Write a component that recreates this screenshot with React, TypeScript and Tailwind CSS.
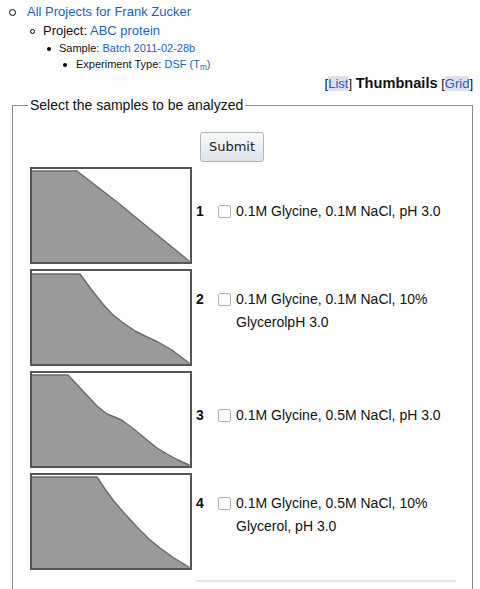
import React from "react";

const LINK = "text-[#1b5fb8]";

type Row = { n: number; label: string; pts: string; two: boolean };

const rows: Row[] = [
  { n: 1, label: "0.1M Glycine, 0.1M NaCl, pH 3.0", pts: "0,2 45,2 85,33 157,92", two: false },
  {
    n: 2,
    label: "0.1M Glycine, 0.1M NaCl, 10% GlycerolpH 3.0",
    pts: "0,3 48,3 59,18 70,32 80,43 90,51 103,60 115,66 126,71 140,79 157,92",
    two: true,
  },
  {
    n: 3,
    label: "0.1M Glycine, 0.5M NaCl, pH 3.0",
    pts: "0,2 36,2 50,17 65,33 75,41 85,45 91,48 103,57 115,67 125,75 135,81 146,87 157,92",
    two: false,
  },
  {
    n: 4,
    label: "0.1M Glycine, 0.5M NaCl, 10% Glycerol, pH 3.0",
    pts: "0,2 65,2 73,14 81,25 93,39 105,52 117,64 128,73 142,83 157,92",
    two: true,
  },
];

function Thumb({ pts }: { pts: string }) {
  const fill = `${pts} 158,93 0,93`;
  return (
    <div className="w-[162px] h-[97px] border-2 border-[#555] bg-white shrink-0">
      <svg width="158" height="93" viewBox="0 0 158 93" className="block">
        <polygon points={fill} fill="#9a9a9a" />
        <polyline
          points={pts}
          fill="none"
          stroke="#6a6a6a"
          strokeWidth="1.4"
          strokeLinejoin="round"
          strokeLinecap="round"
        />
      </svg>
    </div>
  );
}

export default function App() {
  return (
    <div
      className="w-[480px] min-h-[589px] bg-white text-[#111]"
      style={{ fontFamily: '"Liberation Sans", Arial, sans-serif' }}
    >
      {/* breadcrumb list */}
      <div className="pt-[3px] text-[13px]">
        <div className="flex items-center h-[18px] leading-[18px]">
          <span className="ml-[9px] mr-[11px] w-[7px] h-[7px] rounded-full border-[1.5px] border-black mt-[1px]" />
          <span className={LINK}>All Projects for Frank Zucker</span>
        </div>
        <div className="flex items-center h-[19px] leading-[19px]">
          <span className="ml-[30px] mr-[8px] w-[5px] h-[5px] rounded-full border border-black mt-[2px]" />
          <span>
            Project: <span className={LINK}>ABC protein</span>
          </span>
        </div>
        <div className="flex items-center h-[16px] leading-[16px] text-[11px]">
          <span className="ml-[47px] mr-[8px] w-[4px] h-[4px] rounded-full bg-black mt-[1px]" />
          <span>
            Sample: <span className={LINK}>Batch 2011-02-28b</span>
          </span>
        </div>
        <div className="flex items-center h-[17px] leading-[17px] text-[11px]">
          <span className="ml-[63px] mr-[9px] w-[4px] h-[4px] rounded-full bg-black mt-[1px]" />
          <span>
            Experiment Type:{" "}
            <span className={LINK}>
              DSF (T<sub>m</sub>)
            </span>
          </span>
        </div>
      </div>

      {/* view switch */}
      <div className="flex justify-end h-[20px] leading-[20px] pr-[7px] text-[13px]">
        <span>
          [<span className={`${LINK} bg-[#dfe0ee]`}>List</span>]{" "}
          <span className="font-bold text-[14.6px]">Thumbnails</span>{" "}
          [<span className={`${LINK} bg-[#dfe0ee]`}>Grid</span>]
        </span>
      </div>

      {/* fieldset */}
      <fieldset className="mt-[4px] ml-[12px] w-[461px] border border-[#8a8a8a] pl-[15px] pr-[15px] pb-[20px] text-[14px]">
        <legend className="px-[2px] leading-[17px] text-[14px]">
          Select the samples to be analyzed
        </legend>
        <div className="pt-[18px]">
          <button
            className="ml-[172px] w-[64px] h-[30px] rounded-[3px] border border-[#aab6c2] bg-gradient-to-b from-[#f8fafb] to-[#dde3e9] text-[13px] text-[#1a1a1a]"
            style={{ fontFamily: '"DejaVu Sans", Verdana, sans-serif' }}
          >
            Submit
          </button>
        </div>
        <div className="mt-[5px] ml-[2px] flex flex-col gap-[5px]">
          {rows.map((r) => (
            <div key={r.n} className="flex items-center">
              <Thumb pts={r.pts} />
              <div className={`flex items-start ml-[4px] ${r.two ? "pb-[14px]" : "pb-[8px]"}`}>
                <span className="w-[22px] font-bold leading-[23px]">{r.n}</span>
                <span className="mt-[5px] w-[13px] h-[13px] rounded-[2px] border border-[#a9b1ba] bg-white shrink-0" />
                <span className="ml-[5px] w-[220px] leading-[23px]">{r.label}</span>
              </div>
            </div>
          ))}
        </div>
        <div className="mt-[10px] ml-[168px] w-[260px] h-[30px] border-t-2 border-[#e2e6ea]" />
      </fieldset>
    </div>
  );
}
